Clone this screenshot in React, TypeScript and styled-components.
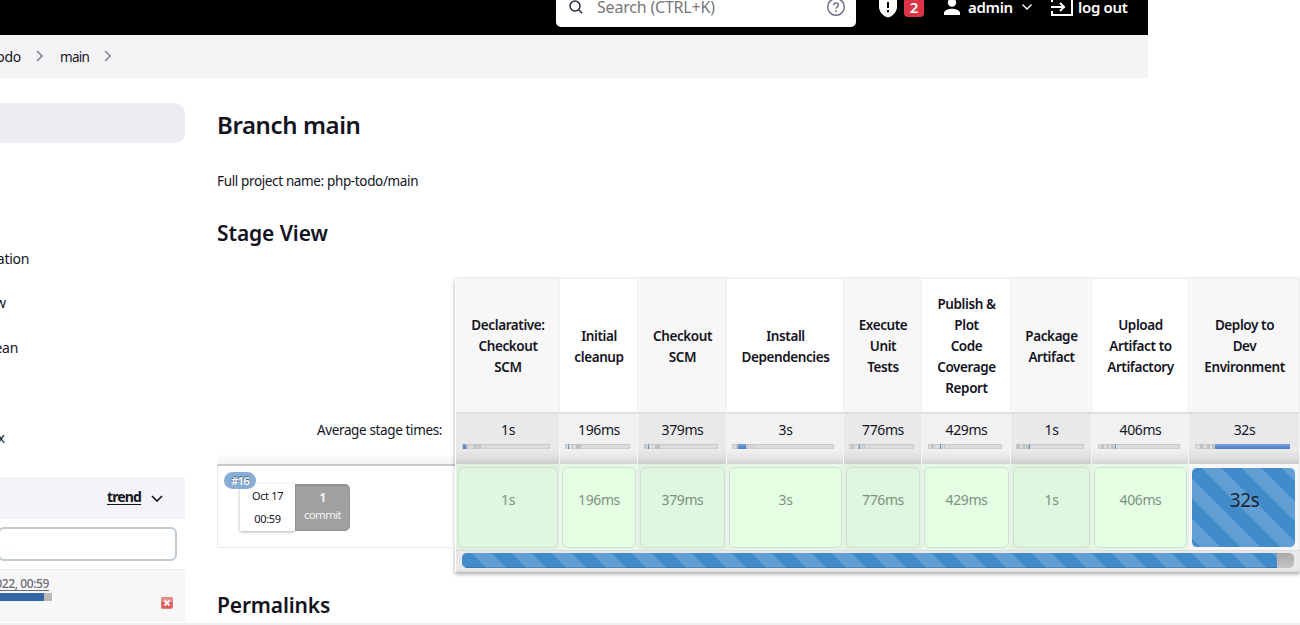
import React from "react";
import styled, { createGlobalStyle } from "styled-components";

const Global = createGlobalStyle`
  * { box-sizing: border-box; }
  body { margin: 0; background: #fff; overflow: hidden; font-family: "Noto Sans", sans-serif; font-size: 14px; color: #14141f; }
  svg { display: block; flex: none; }
`;

const stripes = (x: number) =>
  `linear-gradient(45deg, rgba(255,255,255,.16) 25%, transparent 25%, transparent 50%, rgba(255,255,255,.16) 50%, rgba(255,255,255,.16) 75%, transparent 75%) ${x}px 0 / 40px 40px #428bca`;

const Page = styled.div`
  width: 1300px;
  height: 625px;
  overflow: hidden;
  display: flex;
  flex-direction: column;
  border-bottom: 2px solid #efefef;
`;
const Text = styled.span<{ $s?: number; $w?: number; $ls?: number; $c?: string; $lh?: number }>`
  display: inline-block;
  font-size: ${(p) => p.$s ?? 14}px;
  font-weight: ${(p) => p.$w ?? 400};
  letter-spacing: ${(p) => p.$ls ?? 0}px;
  color: ${(p) => p.$c ?? "#14141f"};
  line-height: ${(p) => p.$lh ?? 20}px;
  white-space: nowrap;
`;

const Header = styled.header`
  width: 1148px;
  height: 35px;
  flex: none;
  background: #000;
  display: flex;
  align-items: flex-start;
  padding-left: 556px;
`;
const SearchBox = styled.div`
  width: 300px;
  height: 27px;
  background: #fff;
  border-radius: 0 0 5px 5px;
  display: flex;
  padding: 0 10px 0 12px;
`;
const SearchLabel = styled.div`
  flex: 1;
  display: flex;
  align-items: flex-start;
  padding-left: 13px;
`;
const Count = styled.div`
  width: 20px;
  height: 17px;
  margin: 0 19px 0 7px;
  background: #dc3545;
  border-radius: 0 0 4px 4px;
  text-align: center;
  line-height: 14px;
  font-size: 15px;
  font-weight: 600;
  color: #fff;
`;
const HeaderText = styled.div<{ $width: number }>`
  width: ${(p) => p.$width}px;
  display: flex;
`;

const Crumbs = styled.nav`
  width: 1148px;
  height: 43px;
  flex: none;
  background: #f4f4f7;
  display: flex;
  align-items: center;
`;
const Clip = styled.div<{ $width: number }>`
  width: ${(p) => p.$width}px;
  display: flex;
  justify-content: flex-end;
  overflow: hidden;
`;
const Crumb = styled.div`
  width: 8px;
  margin: 0 16px 2px 15px;
`;

const Body = styled.div`
  display: flex;
  flex: 1;
  min-height: 0;
`;
const Sidebar = styled.aside`
  width: 185px;
  flex: none;
  padding-top: 25px;
  display: flex;
  flex-direction: column;
`;
const ActiveTask = styled.div`
  height: 40px;
  background: #edecf2;
  border-radius: 0 10px 10px 0;
`;
const Tasks = styled.div`
  height: 334px;
  padding-top: 106px;
  display: flex;
  flex-direction: column;
`;
const Task = styled.div<{ $h: number }>`
  height: ${(p) => p.$h}px;
`;
const HistoryHead = styled.div`
  height: 42px;
  background: #f3f3f8;
  display: flex;
  align-items: center;
  padding-left: 107px;
`;
const TrendLink = styled.a`
  width: 34px;
  margin: 0 10px 3px 0;
  font-size: 14px;
  font-weight: 700;
  letter-spacing: -0.85px;
  text-decoration: underline;
  text-underline-offset: 2px;
`;
const FilterInput = styled.div`
  width: 179px;
  height: 34px;
  margin: 8px 0 8px -2px;
  border: 2px solid #c0ccd2;
  border-radius: 6px;
`;
const Build = styled.div`
  height: 52px;
  background: #f7f7f7;
  border-top: 1px solid #f0f0f0;
  border-bottom: 1px solid #f0f0f0;
  display: flex;
  align-items: flex-start;
`;
const BuildInfo = styled.div`
  width: 161px;
  padding-top: 4px;
`;
const BuildDate = styled.div`
  width: 49px;
  height: 19px;
  display: flex;
  justify-content: flex-end;
  overflow: hidden;
`;
const DateLink = styled(Text)`
  text-decoration: underline;
  text-underline-offset: 2px;
`;
const BuildProgress = styled.div`
  width: 52px;
  height: 8px;
  background: #bababa;
  &::before { content: ""; display: block; width: 44px; height: 8px; background: #3465a4; }
`;
const StopIcon = styled.div`
  margin-top: 27px;
`;

const Main = styled.main`
  padding: 32px 0 0 32px;
  width: 1115px;
  flex: none;
`;
const Title = styled.h1<{ $h: number; $s: number; $ls: number }>`
  margin: 0;
  height: ${(p) => p.$h}px;
  font-size: ${(p) => p.$s}px;
  line-height: 30px;
  font-weight: 600;
  letter-spacing: ${(p) => p.$ls}px;
`;
const FullName = styled.div`
  height: 47px;
`;
const Pipeline = styled.div`
  display: flex;
  align-items: flex-start;
  height: 313px;
`;
const JobSide = styled.div`
  width: 238px;
  padding-top: 136px;
`;
const AverageLabel = styled.div`
  height: 53px;
  padding: 7px 13px 0 0;
  text-align: right;
  border-bottom: 2px solid #c9c9c9;
  background: linear-gradient(#fff 40px, #f3f3f3);
`;
const Job = styled.div`
  height: 82px;
  border: 1px solid #ebebeb;
  border-top: 0;
  padding: 18px 0 0 22px;
  position: relative;
  display: flex;
`;
const RunBadge = styled.div`
  position: absolute;
  left: 6px;
  top: 6px;
  width: 32px;
  height: 17px;
  border-radius: 9px;
  background: #89aed5;
  color: #fff;
  font-size: 11.5px;
  line-height: 18px;
  font-weight: 600;
  letter-spacing: -0.8px;
  text-align: center;
  text-shadow: 0 -1px 1px rgba(0, 0, 0, 0.5);
`;
const DateCard = styled.div`
  width: 55px;
  height: 47px;
  background: #fff;
  box-shadow: 0 1px 3px rgba(0, 0, 0, 0.3);
  font-size: 11px;
  letter-spacing: -0.35px;
  line-height: 23px;
  text-align: center;
`;
const CommitCard = styled.div`
  width: 55px;
  height: 47px;
  padding-top: 3px;
  background: #a0a0a0;
  border: 1px solid #929292;
  border-top-width: 2px;
  border-radius: 0 5px 5px 0;
  font-size: 11.5px;
  letter-spacing: -0.7px;
  line-height: 17px;
  color: #f4f4f4;
  text-align: center;
`;

const Table = styled.div`
  width: 845px;
  height: 294px;
  margin-top: 1px;
  border-top: 1px solid #eee;
  box-shadow: 0 2px 4px rgba(0, 0, 0, 0.35);
  padding-left: 1px;
`;
const Stages = styled.div`
  display: flex;
`;
const Stage = styled.div<{ $width: number }>`
  width: ${(p) => p.$width}px;
  flex: none;
`;
const StageHead = styled.div<{ $odd: boolean }>`
  height: 133px;
  padding: 2px 0 0 1px;
  background: ${(p) => (p.$odd ? "#f7f7f7" : "#fff")};
  border-right: 1px solid #f0f0f0;
  display: flex;
  align-items: center;
  justify-content: center;
  text-align: center;
  white-space: pre;
  font-weight: 600;
  font-size: 13.5px;
  letter-spacing: -0.4px;
  line-height: 21px;
`;
const StageAverage = styled.div<{ $odd: boolean }>`
  height: 52px;
  border-top: 2px solid #dedede;
  border-right: 1px solid #f5f5f5;
  padding-top: 6px;
  background: ${(p) => (p.$odd ? "linear-gradient(#e9e9e9 36px, #dedede 44px, #cbcbcb)" : "linear-gradient(#f1f1f1 36px, #e6e6e6 44px, #d2d2d2)")};
  text-align: center;
`;
const AverageTime = styled.div`
  height: 24px;
  padding-left: 1px;
`;
const MiniBar = styled.div<{ $left: number; $width: number }>`
  width: ${(p) => p.$width}px;
  height: 5px;
  margin-left: ${(p) => p.$left}px;
  background: #dcdcdc;
  border: 1px solid #c8c8c8;
  border-bottom-color: #cfcfcf;
  display: flex;
`;
const Segment = styled.i<{ $w: number; $kind: string }>`
  width: ${(p) => p.$w}px;
  height: 5px;
  margin-top: -1px;
  flex: none;
  background: ${(p) => (p.$kind === "b" ? "linear-gradient(#7ba0d6, #4a7ccb)" : p.$kind === "g" ? "#c2c2c2" : "transparent")};
`;
const StageCell = styled.div<{ $odd: boolean; $active?: boolean }>`
  height: 86px;
  padding: 3px ${(p) => (p.$active ? 3 : 1)}px 2px 2px;
  border-right: 1px solid #eee;
  background: ${(p) => (p.$active ? "#f7f7f7" : p.$odd ? "#dff2df" : "#e5f8e5")};
`;
const CellInner = styled.div<{ $odd: boolean; $active?: boolean }>`
  height: 81px;
  border: 1px solid ${(p) => (p.$active ? "#f7f7f7" : "#d3dcd4")};
  border-radius: 6px;
  padding: 22px 0 0 ${(p) => (p.$active ? 2 : 0)}px;
  text-align: center;
  background: ${(p) => (p.$active ? stripes(10) : p.$odd ? "#def7de" : "#e4ffe4")};
`;
const ProgressRow = styled.div`
  height: 22px;
  background: #e9e9e9;
  border-top: 1px solid #ddd;
  border-bottom: 2px solid #e0e0e0;
  padding: 2px 6px 0 6px;
`;
const ProgressTrack = styled.div`
  height: 15px;
  width: 832px;
  border-radius: 5px;
  overflow: hidden;
  background: linear-gradient(#aaa, #c4c4c4);
`;
const ProgressFill = styled.div`
  width: 815px;
  height: 15px;
  background: ${stripes(10)};
  box-shadow: inset 0 -1px 0 rgba(0, 0, 0, 0.15);
`;

type Seg = [number, string];
interface StageData {
  name: string;
  time: string;
  width: number;
  left: number;
  bar: number;
  segs: Seg[];
}
const stages: StageData[] = [
  { name: "Declarative:\nCheckout\nSCM", time: "1s", width: 104, left: 6, bar: 88, segs: [[3, "b"], [2, "g"], [6, "n"], [3, "g"], [1, "n"], [3, "g"]] },
  { name: "Initial\ncleanup", time: "196ms", width: 78, left: 5, bar: 65, segs: [[2, "n"], [1, "b"], [3, "n"], [1, "g"], [3, "n"], [5, "g"]] },
  { name: "Checkout\nSCM", time: "379ms", width: 89, left: 6, bar: 74, segs: [[2, "g"], [1, "n"], [1, "b"], [6, "n"], [5, "g"]] },
  { name: "Install\nDependencies", time: "3s", width: 117, left: 5, bar: 102, segs: [[3, "n"], [2, "g"], [8, "b"], [2, "g"], [2, "n"], [1, "g"], [2, "n"], [1, "g"]] },
  { name: "Execute\nUnit\nTests", time: "776ms", width: 78, left: 5, bar: 65, segs: [[1, "n"], [3, "g"], [4, "n"], [1, "g"], [1, "b"], [2, "n"], [1, "g"], [1, "n"], [1, "g"]] },
  { name: "Publish &\nPlot\nCode\nCoverage\nReport", time: "429ms", width: 89, left: 6, bar: 74, segs: [[2, "n"], [3, "g"], [6, "n"], [1, "b"], [1, "n"], [1, "g"], [1, "n"], [1, "g"]] },
  { name: "Package\nArtifact", time: "1s", width: 81, left: 5, bar: 68, segs: [[3, "g"], [3, "n"], [2, "g"], [1, "n"], [3, "g"], [1, "b"]] },
  { name: "Upload\nArtifact to\nArtifactory", time: "406ms", width: 97, left: 6, bar: 82, segs: [[2, "n"], [3, "g"], [3, "n"], [2, "g"], [2, "n"], [3, "g"], [1, "n"], [1, "b"]] },
  { name: "Deploy to\nDev\nEnvironment", time: "32s", width: 111, left: 6, bar: 95, segs: [[4, "n"], [3, "g"], [4, "n"], [3, "g"], [2, "n"], [3, "g"], [75, "b"]] },
];

const Chevron = ({ w, h, color, down }: { w: number; h: number; color: string; down?: boolean }) => (
  <svg width={w} height={h} viewBox={down ? "0 0 12 7" : "0 0 7 12"} fill="none" stroke={color} strokeWidth="1.6">
    <path d={down ? "M1 1l5 5 5-5" : "M1 1l5 5-5 5"} />
  </svg>
);

export default function App() {
  return (
    <>
      <Global />
      <Page>
        <Header>
          <SearchBox>
            <svg width="16" height="16" viewBox="0 0 16 16" fill="none" stroke="#2a2a3a" strokeWidth="1.5">
              <circle cx="7" cy="6" r="5" />
              <path d="M10.7 9.7L14.2 13.2" />
            </svg>
            <SearchLabel><Text $s={16} $ls={-0.2} $lh={14} $c="#777">Search (CTRL+K)</Text></SearchLabel>
            <svg width="20" height="18" viewBox="0 0 20 18" fill="none" stroke="#70708c" strokeWidth="1.5">
              <circle cx="10" cy="7" r="8.3" />
              <path d="M7.7 5.2c.1-3 4.7-2.8 4.7 0 0 1.8-2.3 1.7-2.3 3.6M10 10.3v1.6" />
            </svg>
          </SearchBox>
          <svg width="41" height="20" viewBox="0 0 41 20">
            <path d="M23 -2h18v9c0 5-4.500 9.500-9 10.500-4.500-1-9-5.500-9-10.500z" fill="#fff" />
            <path d="M32 2v6M32 10v2.2" stroke="#000" strokeWidth="2" />
          </svg>
          <Count>2</Count>
          <svg width="25" height="18" viewBox="0 0 25 18" fill="#fff">
            <circle cx="9" cy="2.500" r="4.200" />
            <path d="M1 15v-2c0-3 5.500-4.300 8-4.300s8 1.300 8 4.300v2z" />
          </svg>
          <HeaderText $width={53}><Text $s={15} $w={600} $ls={-0.3} $lh={14} $c="#fff">admin</Text></HeaderText>
          <svg width="29" height="16" viewBox="0 0 29 16" fill="none" stroke="#fff" strokeWidth="1.400">
            <path d="M1.500 4.500L6 9l4.500-4.500" />
          </svg>
          <svg width="28" height="18" viewBox="0 0 28 18" fill="none" stroke="#fff" strokeWidth="2">
            <path d="M2 2v-4h20v17H2v-4M1 7h12M10 3l4 4-4 4" />
          </svg>
          <HeaderText $width={52}><Text $s={15} $w={600} $ls={-0.3} $lh={14} $c="#fff">log out</Text></HeaderText>
        </Header>
        <Crumbs>
          <Clip $width={21}><Text $ls={-0.3}>odo</Text></Clip>
          <Crumb><Chevron w={7} h={12} color="#85858f" /></Crumb>
          <Text $s={13.5} $ls={-0.7}>main</Text>
          <Crumb><Chevron w={7} h={12} color="#85858f" /></Crumb>
        </Crumbs>
        <Body>
          <Sidebar>
            <ActiveTask />
            <Tasks>
              <Task $h={44}><Clip $width={29}><Text $ls={-0.3}>ation</Text></Clip></Task>
              <Task $h={45}><Clip $width={6}><Text>w</Text></Clip></Task>
              <Task $h={90}><Clip $width={18}><Text $ls={-0.3}>ean</Text></Clip></Task>
              <Task $h={20}><Clip $width={5}><Text>x</Text></Clip></Task>
            </Tasks>
            <HistoryHead>
              <TrendLink>trend</TrendLink>
              <Chevron w={12} h={7} color="#14141f" down />
            </HistoryHead>
            <FilterInput />
            <Build>
              <BuildInfo>
                <BuildDate><DateLink $s={12} $w={500} $ls={-0.4} $c="#6b6b72">2022, 00:59</DateLink></BuildDate>
                <BuildProgress />
              </BuildInfo>
              <StopIcon>
                <svg width="12" height="12" viewBox="0 0 12 12">
                  <rect x=".5" y=".5" width="11" height="11" rx="1" fill="#e25b5b" stroke="#d98080" />
                  <rect x="1" y="1" width="10" height="4" fill="#ee8f8f" />
                  <path d="M3.500 3.500l5 5M8.500 3.500l-5 5" stroke="#fff" strokeWidth="1.800" />
                </svg>
              </StopIcon>
            </Build>
          </Sidebar>
          <Main>
            <Title $h={61} $s={24} $ls={-0.4}>Branch main</Title>
            <FullName><Text $s={13.5} $ls={-0.36}>Full project name: php-todo/main</Text></FullName>
            <Title $h={59} $s={21} $ls={-0.1}>Stage View</Title>
            <Pipeline>
              <JobSide>
                <AverageLabel><Text $s={13.5} $ls={-0.37}>Average stage times:</Text></AverageLabel>
                <Job>
                  <DateCard>Oct 17<br />00:59</DateCard>
                  <CommitCard><b>1</b><br />commit</CommitCard>
                  <RunBadge>#16</RunBadge>
                </Job>
              </JobSide>
              <Table>
                <Stages>
                  {stages.map((s, i) => {
                    const odd = i % 2 === 0;
                    const active = i === stages.length - 1;
                    return (
                      <Stage key={s.name} $width={s.width}>
                        <StageHead $odd={odd}>{s.name}</StageHead>
                        <StageAverage $odd={odd}>
                          <AverageTime><Text $ls={-0.4}>{s.time}</Text></AverageTime>
                          <MiniBar $left={s.left} $width={s.bar}>
                            {s.segs.map(([w, k], j) => <Segment key={j} $w={w} $kind={k} />)}
                          </MiniBar>
                        </StageAverage>
                        <StageCell $odd={odd} $active={active}>
                          <CellInner $odd={odd} $active={active}>
                            <Text $s={active ? 19 : 14} $ls={-0.4} $c={active ? "#1d2533" : "#7d917f"}>{s.time}</Text>
                          </CellInner>
                        </StageCell>
                      </Stage>
                    );
                  })}
                </Stages>
                <ProgressRow><ProgressTrack><ProgressFill /></ProgressTrack></ProgressRow>
              </Table>
            </Pipeline>
            <Title $h={30} $s={21} $ls={-0.15}>Permalinks</Title>
          </Main>
        </Body>
      </Page>
    </>
  );
}
